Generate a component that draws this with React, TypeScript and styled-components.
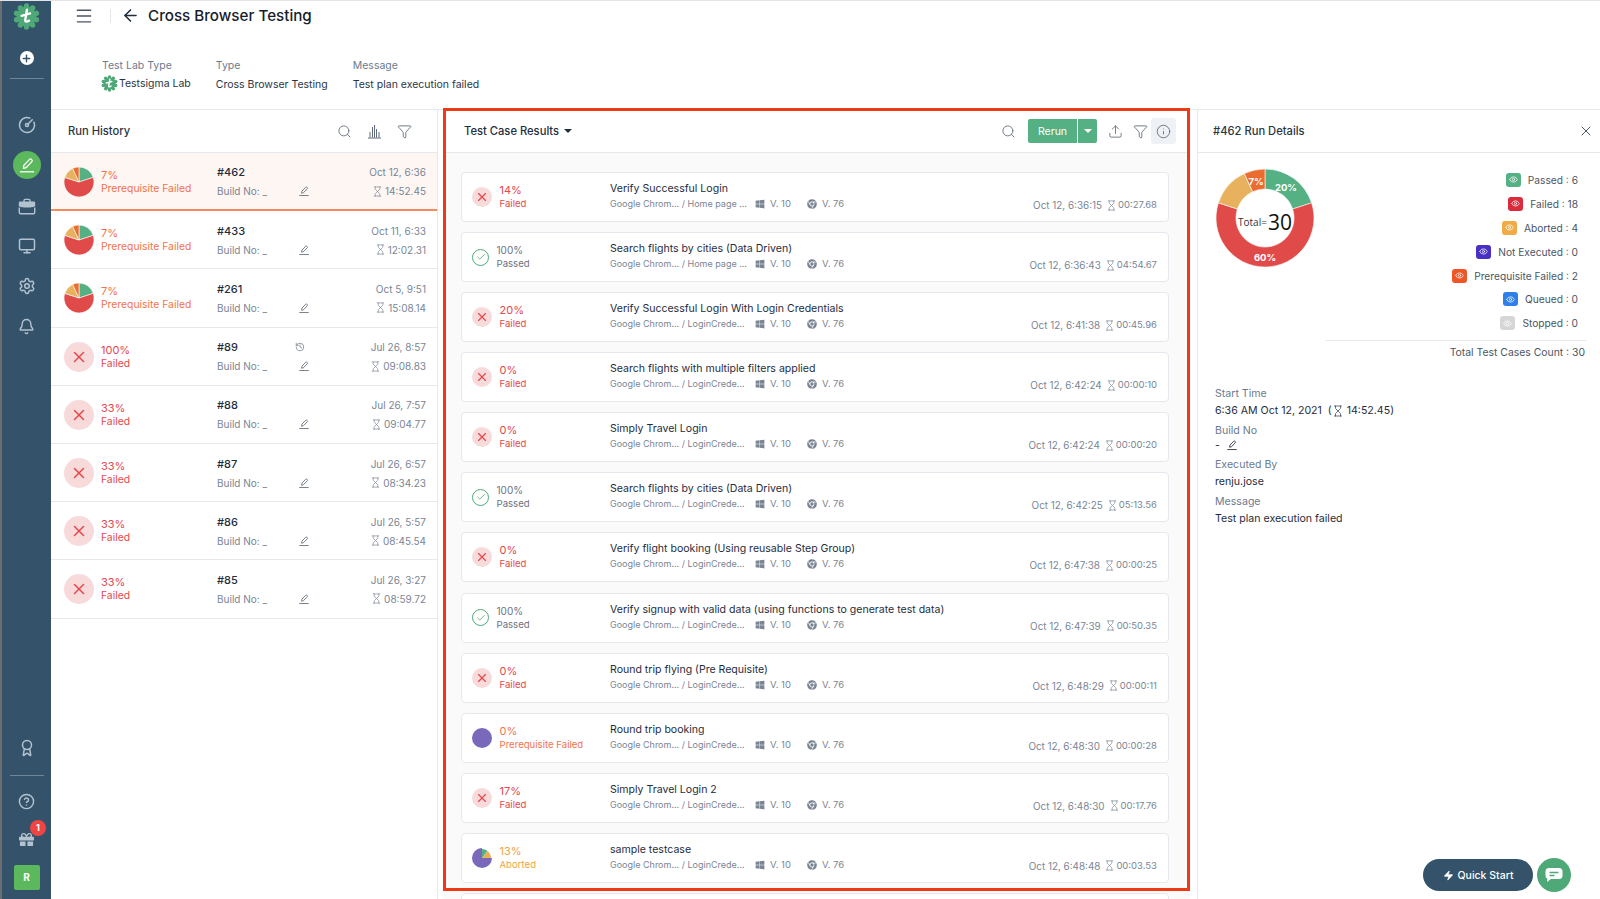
import React from "react";
import styled, { createGlobalStyle } from "styled-components";
import {
  ArrowLeft,
  Award,
  Bell,
  Check,
  CircleGauge,
  CircleHelp,
  Funnel,
  Hourglass,
  History,
  Info,
  Menu,
  Monitor,
  Plus,
  Search,
  Settings,
  Upload,
  X,
  Eye,
  Zap,
} from "lucide-react";
import { FaChrome, FaGift, FaWindows } from "react-icons/fa";

type Status = "failed" | "passed" | "prereq" | "aborted";

const tones: Record<Status, string> = {
  failed: "#e5484d",
  passed: "#6b7280",
  prereq: "#f2734a",
  aborted: "#f3a33f",
};

const labels: Record<Status, string> = {
  failed: "Failed",
  passed: "Passed",
  prereq: "Prerequisite Failed",
  aborted: "Aborted",
};

const runs = [
  { pct: "7%", status: "prereq", id: "#462", date: "Oct 12, 6:36", time: "14:52.45", active: true },
  { pct: "7%", status: "prereq", id: "#433", date: "Oct 11, 6:33", time: "12:02.31" },
  { pct: "7%", status: "prereq", id: "#261", date: "Oct 5, 9:51", time: "15:08.14" },
  { pct: "100%", status: "failed", id: "#89", date: "Jul 26, 8:57", time: "09:08.83", history: true },
  { pct: "33%", status: "failed", id: "#88", date: "Jul 26, 7:57", time: "09:04.77" },
  { pct: "33%", status: "failed", id: "#87", date: "Jul 26, 6:57", time: "08:34.23" },
  { pct: "33%", status: "failed", id: "#86", date: "Jul 26, 5:57", time: "08:45.54" },
  { pct: "33%", status: "failed", id: "#85", date: "Jul 26, 3:27", time: "08:59.72" },
] as { pct: string; status: Status; id: string; date: string; time: string; active?: boolean; history?: boolean }[];

const cases = [
  { pct: "14%", status: "failed", title: "Verify Successful Login", suite: "Home page ...", date: "Oct 12, 6:36:15", time: "00:27.68" },
  { pct: "100%", status: "passed", title: "Search flights by cities (Data Driven)", suite: "Home page ...", date: "Oct 12, 6:36:43", time: "04:54.67" },
  { pct: "20%", status: "failed", title: "Verify Successful Login With Login Credentials", suite: "LoginCrede...", date: "Oct 12, 6:41:38", time: "00:45.96" },
  { pct: "0%", status: "failed", title: "Search flights with multiple filters applied", suite: "LoginCrede...", date: "Oct 12, 6:42:24", time: "00:00:10" },
  { pct: "0%", status: "failed", title: "Simply Travel Login", suite: "LoginCrede...", date: "Oct 12, 6:42:24", time: "00:00:20" },
  { pct: "100%", status: "passed", title: "Search flights by cities (Data Driven)", suite: "LoginCrede...", date: "Oct 12, 6:42:25", time: "05:13.56" },
  { pct: "0%", status: "failed", title: "Verify flight booking (Using reusable Step Group)", suite: "LoginCrede...", date: "Oct 12, 6:47:38", time: "00:00:25" },
  { pct: "100%", status: "passed", title: "Verify signup with valid data (using functions to generate test data)", suite: "LoginCrede...", date: "Oct 12, 6:47:39", time: "00:50.35" },
  { pct: "0%", status: "failed", title: "Round trip flying (Pre Requisite)", suite: "LoginCrede...", date: "Oct 12, 6:48:29", time: "00:00:11" },
  { pct: "0%", status: "prereq", title: "Round trip booking", suite: "LoginCrede...", date: "Oct 12, 6:48:30", time: "00:00:28" },
  { pct: "17%", status: "failed", title: "Simply Travel Login 2", suite: "LoginCrede...", date: "Oct 12, 6:48:30", time: "00:17.76" },
  { pct: "13%", status: "aborted", title: "sample testcase", suite: "LoginCrede...", date: "Oct 12, 6:48:48", time: "00:03.53" },
] as { pct: string; status: Status; title: string; suite: string; date: string; time: string }[];

const legend = [
  { label: "Passed : 6", color: "#55b083" },
  { label: "Failed : 18", color: "#dc2c3c" },
  { label: "Aborted : 4", color: "#f0ab45" },
  { label: "Not Executed : 0", color: "#4a2fc4" },
  { label: "Prerequisite Failed : 2", color: "#ee5527" },
  { label: "Queued : 0", color: "#2f7fe8" },
  { label: "Stopped : 0", color: "#d6d6d6" },
];

// angle in degrees, clockwise from 12 o'clock
const polar = (c: number, r: number, a: number) => {
  const rad = (a * Math.PI) / 180;
  return [c + r * Math.sin(rad), c - r * Math.cos(rad)];
};

const slice = (c: number, r: number, from: number, to: number) => {
  const [x1, y1] = polar(c, r, from);
  const [x2, y2] = polar(c, r, to);
  return `M${c} ${c}L${x1} ${y1}A${r} ${r} 0 ${to - from > 180 ? 1 : 0} 1 ${x2} ${y2}Z`;
};

const ring = (c: number, r: number, inner: number, from: number, to: number) => {
  const [x1, y1] = polar(c, r, from);
  const [x2, y2] = polar(c, r, to);
  const [x3, y3] = polar(c, inner, to);
  const [x4, y4] = polar(c, inner, from);
  const large = to - from > 180 ? 1 : 0;
  return `M${x1} ${y1}A${r} ${r} 0 ${large} 1 ${x2} ${y2}L${x3} ${y3}A${inner} ${inner} 0 ${large} 0 ${x4} ${y4}Z`;
};

const RunPie = () => (
  <svg width="30" height="30" viewBox="0 0 30 30" style={{ flex: "none" }}>
    <path d={slice(15, 15, 0, 72)} fill="#55b083" stroke="#fff" strokeWidth="0.6" />
    <path d={slice(15, 15, 72, 288)} fill="#e04b4a" stroke="#fff" strokeWidth="0.6" />
    <path d={slice(15, 15, 288, 335)} fill="#e8b15d" stroke="#fff" strokeWidth="0.6" />
    <path d={slice(15, 15, 335, 360)} fill="#ea6c2f" stroke="#fff" strokeWidth="0.6" />
  </svg>
);

const AbortedPie = () => (
  <svg width="20" height="20" viewBox="0 0 20 20" style={{ flex: "none" }}>
    <path d={slice(10, 10, 90, 360)} fill="#7a68bb" />
    <path d={slice(10, 9, 0, 38)} fill="#55b083" />
    <path d={slice(10, 9, 38, 90)} fill="#e8b15d" />
  </svg>
);

const Pencil = ({ size = 14, color = "currentColor" }: { size?: number; color?: string }) => (
  <svg width={size} height={size} viewBox="0 0 14 14" fill="none" stroke={color} strokeWidth="1">
    <path d="M4.2 9.6 4.6 7.2 9 2.6a1 1 0 0 1 1.4 0l.4.4a1 1 0 0 1 0 1.4L6.4 9z" strokeLinejoin="round" />
    <path d="M1.5 12.3h11" />
  </svg>
);

const Logo = ({ size }: { size: number }) => (
  <svg width={size} height={size} viewBox="0 0 30 30" style={{ flex: "none" }}>
    <circle cx="15" cy="15" r="11" fill="#4fa877" />
    {Array.from({ length: 10 }, (_, i) => {
      const [x, y] = polar(15, 11.6, i * 36);
      return <circle key={i} cx={x} cy={y} r="3" fill="#4fa877" />;
    })}
    <path d="M15.5 7.5 13.6 19q-.3 2 2 1.6l2.2-1M9.5 14.2l9.5-2.6" fill="none" stroke="#fff" strokeWidth="2.6" strokeLinecap="round" />
  </svg>
);

const BriefcaseIcon = () => (
  <svg width="18" height="17" viewBox="0 0 18 17" fill="none">
    <path d="M6 4V2.4A1 1 0 0 1 7 1.4h4a1 1 0 0 1 1 1V4" stroke="#b4c2cf" strokeWidth="1.4" />
    <path d="M2 3.6h14a1.2 1.2 0 0 1 1.2 1.2v3.4c-2.4 1-5 1.4-8.2 1.4S3.200 9.200.8 8.200V4.800A1.200 1.200 0 0 1 2 3.600z" fill="#b4c2cf" />
    <path d="M1.300 9.500v5a1.200 1.200 0 0 0 1.200 1.200h13a1.200 1.200 0 0 0 1.200-1.200v-5" stroke="#b4c2cf" strokeWidth="1.400" />
  </svg>
);

const BarsIcon = () => (
  <svg width="15" height="15" viewBox="0 0 15 15" fill="none" stroke="#5f6b7a" strokeWidth="1">
    <path d="M1 14h13M3 13.500V8M5.500 13.500V3M7.500 13.500V1M9.500 13.500V5M12 13.500V8" />
  </svg>
);

const ChatIcon = () => (
  <svg width="18" height="16" viewBox="0 0 18 16">
    <path d="M4 1h10a3.500 3.500 0 0 1 3.500 3.500v4A3.500 3.500 0 0 1 14 12H6l-4 3 .4-3.300A3.500 3.500 0 0 1 .5 8.500v-4A3.500 3.500 0 0 1 4 1z" fill="#fff" />
    <path d="M4.500 5.500h9M4.500 8.500h5" stroke="#4fa877" strokeWidth="1.400" />
  </svg>
);

const StatusIcon = ({ status, large }: { status: Status; large?: boolean }) => {
  if (status === "prereq") {
    return large ? <RunPie /> : <PurpleDot />;
  }
  if (status === "aborted") {
    return <AbortedPie />;
  }
  if (status === "passed") {
    return (
      <PassedRing>
        <Check size={10} strokeWidth={2} />
      </PassedRing>
    );
  }
  return (
    <FailedDot $large={large}>
      <X size={large ? 18 : 14} strokeWidth={2} />
    </FailedDot>
  );
};

export default function App() {
  return (
    <>
      <GlobalStyle />
      <Page>
        <Sidebar>
          <Logo size={27} />
          <AddButton>
            <Plus size={11} strokeWidth={3} />
          </AddButton>
          <SideRule />
          <SideItem $top={36}>
            <CircleGauge size={18} />
          </SideItem>
          <ActiveItem>
            <Pencil size={18} color="#fff" />
          </ActiveItem>
          <SideItem $top={17}>
            <BriefcaseIcon />
          </SideItem>
          <SideItem $top={20}>
            <Monitor size={18} />
          </SideItem>
          <SideItem $top={20}>
            <Settings size={18} />
          </SideItem>
          <SideItem $top={20}>
            <Bell size={17} />
          </SideItem>
          <SideBottom>
            <SideItem>
              <Award size={18} />
            </SideItem>
            <SideRule $top={17} />
            <SideItem $top={15}>
              <CircleHelp size={17} />
            </SideItem>
            <GiftItem>
              <FaGift size={15} />
              <GiftBadge>1</GiftBadge>
            </GiftItem>
            <AvatarTile>R</AvatarTile>
          </SideBottom>
        </Sidebar>

        <Main>
          <TopArea>
            <TopBar>
              <Menu size={20} strokeWidth={1.7} color="#4b5563" />
              <TopDivider />
              <ArrowLeft size={19} strokeWidth={2} color="#1f2d3d" />
              <PageTitle>Cross Browser Testing</PageTitle>
            </TopBar>
            <InfoBar>
              <InfoItem>
                <InfoLabel>Test Lab Type</InfoLabel>
                <LabValue>
                  <Logo size={17} />
                  Testsigma Lab
                </LabValue>
              </InfoItem>
              <InfoItem>
                <InfoLabel>Type</InfoLabel>
                <InfoValue>Cross Browser Testing</InfoValue>
              </InfoItem>
              <InfoItem>
                <InfoLabel>Message</InfoLabel>
                <InfoValue>Test plan execution failed</InfoValue>
              </InfoItem>
            </InfoBar>
          </TopArea>

          <Columns>
            <HistoryPanel>
              <HistoryHead>
                <HeadTitle>Run History</HeadTitle>
                <HeadIcons>
                  <Search size={15} strokeWidth={1.4} />
                  <BarsIcon />
                  <Funnel size={15} strokeWidth={1.4} />
                </HeadIcons>
              </HistoryHead>
              {runs.map((run) => (
                <RunRow key={run.id} $active={run.active}>
                  <RunStatus>
                    <StatusIcon status={run.status} large />
                    <StatusText>
                      <Percent $tone={tones[run.status]}>{run.pct}</Percent>
                      <StatusLabel $tone={tones[run.status]} $size={10.35}>
                        {labels[run.status]}
                      </StatusLabel>
                    </StatusText>
                  </RunStatus>
                  <RunMeta>
                    <RunLine>
                      <RunId>{run.id}</RunId>
                      {run.history && <HistoryIcon size={10} strokeWidth={1.6} />}
                    </RunLine>
                    <RunLine>
                      <BuildText>Build No: _</BuildText>
                      <Pencil size={12} />
                    </RunLine>
                  </RunMeta>
                  <RunTimes>
                    <TimeText>{run.date}</TimeText>
                    <TimeText>
                      <Hourglass size={11} strokeWidth={1.5} />
                      {run.time}
                    </TimeText>
                  </RunTimes>
                </RunRow>
              ))}
            </HistoryPanel>

            <ResultsPanel>
              <ResultsHead>
                <ResultsTitle>
                  Test Case Results
                  <Caret $color="#1f2d3d" />
                </ResultsTitle>
                <ResultsTools>
                  <Search size={15} strokeWidth={1.4} />
                  <RerunGroup>
                    <RerunButton>Rerun</RerunButton>
                    <RerunCaret>
                      <Caret $color="#fff" />
                    </RerunCaret>
                  </RerunGroup>
                  <Upload size={15} strokeWidth={1.4} />
                  <Funnel size={15} strokeWidth={1.4} />
                  <InfoToggle>
                    <Info size={15} strokeWidth={1.4} />
                  </InfoToggle>
                </ResultsTools>
              </ResultsHead>
              <CaseList>
                {cases.map((item, i) => (
                  <CaseCard key={i}>
                    <CaseStatus>
                      <StatusIcon status={item.status} />
                      <StatusText>
                        <Percent $tone={tones[item.status]} $size={item.status === "passed" ? 10 : 11}>
                          {item.pct}
                        </Percent>
                        <StatusLabel $tone={tones[item.status]} $size={9.6}>
                          {labels[item.status]}
                        </StatusLabel>
                      </StatusText>
                    </CaseStatus>
                    <CaseBody>
                      <CaseTitle>{item.title}</CaseTitle>
                      <CaseSub>
                        <CaseSuite>Google Chrom... / {item.suite}</CaseSuite>
                        <CaseEnv>
                          <FaWindows size={10} />
                          V. 10
                        </CaseEnv>
                        <CaseEnv>
                          <FaChrome size={10} />
                          V. 76
                        </CaseEnv>
                      </CaseSub>
                    </CaseBody>
                    <CaseTime>
                      {item.date}
                      <CaseDuration>
                        <Hourglass size={11} strokeWidth={1.5} />
                        {item.time}
                      </CaseDuration>
                    </CaseTime>
                  </CaseCard>
                ))}
                <CaseCard />
              </CaseList>
              <Highlight />
            </ResultsPanel>

            <DetailsPanel>
              <DetailsHead>
                <HeadTitle>#462 Run Details</HeadTitle>
                <X size={16} strokeWidth={1.5} color="#4b5563" />
              </DetailsHead>
              <DetailsBody>
                <ChartRow>
                  <svg width="100" height="100" viewBox="0 0 100 100" style={{ flex: "none" }}>
                    <path d={ring(50, 49, 29, 0, 72)} fill="#55b083" stroke="#fff" strokeWidth="0.6" />
                    <path d={ring(50, 49, 29, 72, 288)} fill="#e04b4a" stroke="#fff" strokeWidth="0.6" />
                    <path d={ring(50, 49, 29, 288, 335)} fill="#e8b15d" stroke="#fff" strokeWidth="0.6" />
                    <path d={ring(50, 49, 29, 335, 360)} fill="#ea6c2f" stroke="#fff" strokeWidth="0.6" />
                    <ChartLabel x="71" y="23">20%</ChartLabel>
                    <ChartLabel x="41" y="17">7%</ChartLabel>
                    <ChartLabel x="50" y="93">60%</ChartLabel>
                    <text x="23" y="58" fontSize="10" fill="#333" fontFamily="Open Sans, sans-serif">Total=</text>
                    <text x="53" y="61.500" fontSize="21" fill="#111" fontFamily="Open Sans, sans-serif">30</text>
                  </svg>
                  <Legend>
                    {legend.map((item) => (
                      <LegendRow key={item.label}>
                        <LegendChip $color={item.color}>
                          <Eye size={9} strokeWidth={2} />
                        </LegendChip>
                        {item.label}
                      </LegendRow>
                    ))}
                    <LegendTotal>Total Test Cases Count : 30</LegendTotal>
                  </Legend>
                </ChartRow>
                <DetailGroup $top={26}>
                  <DetailLabel>Start Time</DetailLabel>
                  <DetailValue>
                    6:36 AM Oct 12, 2021&nbsp;&nbsp;(
                    <Hourglass size={12} strokeWidth={1.3} />
                    &nbsp;14:52.45)
                  </DetailValue>
                </DetailGroup>
                <DetailGroup>
                  <DetailLabel>Build No</DetailLabel>
                  <DetailValue $compact>
                    -&nbsp;&nbsp;
                    <Pencil size={12} />
                  </DetailValue>
                </DetailGroup>
                <DetailGroup $top={6}>
                  <DetailLabel>Executed By</DetailLabel>
                  <DetailValue>renju.jose</DetailValue>
                </DetailGroup>
                <DetailGroup>
                  <DetailLabel>Message</DetailLabel>
                  <DetailValue>Test plan execution failed</DetailValue>
                </DetailGroup>
              </DetailsBody>
            </DetailsPanel>
          </Columns>
        </Main>

        <QuickStart>
          <Zap size={11} fill="#fff" strokeWidth={1} />
          Quick Start
        </QuickStart>
        <ChatBubble>
          <ChatIcon />
        </ChatBubble>
      </Page>
    </>
  );
}

// ------------ Style settings ------------
const GlobalStyle = createGlobalStyle`
  html, body {
    margin: 0;
    height: 100%;
    overflow: hidden;
    background: #fff;
    font-family: "Inter", "Liberation Sans", sans-serif;
    -webkit-font-smoothing: antialiased;
  }
`;

const Page = styled.div`
  position: relative;
  display: flex;
  width: 1600px;
  height: 899px;
  overflow: hidden;
  border-top: 1px solid #e4e4e6;
  box-sizing: border-box;
`;

const Sidebar = styled.aside`
  display: flex;
  flex-direction: column;
  align-items: center;
  flex: none;
  width: 51px;
  box-sizing: border-box;
  padding: 2px 0 9px;
  background: #34536a;
  border-left: 2px solid #6b6f72;
  color: #b4c2cf;
`;

const AddButton = styled.div`
  display: flex;
  align-items: center;
  justify-content: center;
  width: 14px;
  height: 14px;
  margin-top: 21px;
  border-radius: 50%;
  background: #fff;
  color: #34536a;
`;

const SideRule = styled.div<{ $top?: number }>`
  width: 34px;
  height: 1px;
  margin-top: ${(p) => p.$top ?? 13}px;
  background: #6f8699;
`;

const SideItem = styled.div<{ $top?: number }>`
  display: flex;
  align-items: center;
  justify-content: center;
  height: 20px;
  margin-top: ${(p) => p.$top ?? 0}px;
`;

const ActiveItem = styled.div`
  display: flex;
  align-items: center;
  justify-content: center;
  width: 28px;
  height: 28px;
  margin-top: 16px;
  border-radius: 50%;
  background: #5cb85c;
`;

const SideBottom = styled.div`
  display: flex;
  flex-direction: column;
  align-items: center;
  margin-top: auto;
`;

const GiftItem = styled.div`
  position: relative;
  display: flex;
  justify-content: center;
  margin-top: 21px;
`;

const GiftBadge = styled.span`
  position: absolute;
  top: -12px;
  left: 11px;
  width: 16px;
  height: 16px;
  border-radius: 50%;
  background: #ee4444;
  color: #fff;
  font-size: 9px;
  font-weight: 700;
  line-height: 16px;
  text-align: center;
`;

const AvatarTile = styled.div`
  width: 26px;
  height: 25px;
  margin-top: 18px;
  border-radius: 2px;
  background: #5cb85c;
  color: #fff;
  font-size: 10px;
  font-weight: 700;
  line-height: 25px;
  text-align: center;
`;

const Main = styled.div`
  display: flex;
  flex-direction: column;
  flex: 1;
  min-width: 0;
`;

const TopArea = styled.header`
  flex: none;
  height: 109px;
  box-sizing: border-box;
  border-bottom: 1px solid #e6e8ec;
`;

const TopBar = styled.div`
  display: flex;
  align-items: center;
  height: 29px;
  padding-left: 23px;
`;

const TopDivider = styled.div`
  width: 1px;
  height: 14px;
  margin: 0 10px 0 16px;
  background: #e6e8ec;
`;

const PageTitle = styled.h1`
  margin: 0 0 0 8px;
  color: #16202c;
  font-size: 15.2px;
  font-weight: 500;
`;

const InfoBar = styled.div`
  display: flex;
  gap: 25px;
  padding: 28px 0 0 51px;
`;

const InfoItem = styled.div`
  display: flex;
  flex-direction: column;
`;

const InfoLabel = styled.span`
  color: #6b7a90;
  font-size: 10.5px;
  line-height: 16px;
`;

const InfoValue = styled.span`
  margin-top: 3px;
  color: #2b3644;
  font-size: 10.5px;
  line-height: 16px;
`;

const LabValue = styled(InfoValue)`
  display: flex;
  align-items: center;
  gap: 1px;
  margin: 1px 0 0 -1px;
  color: #2b3644;
`;

const Columns = styled.div`
  display: flex;
  flex: 1;
  min-height: 0;
`;

const HistoryPanel = styled.section`
  flex: none;
  width: 387px;
  box-sizing: border-box;
  border-right: 1px solid #e6e8ec;
`;

const HistoryHead = styled.div`
  display: flex;
  align-items: center;
  justify-content: space-between;
  height: 43px;
  box-sizing: border-box;
  padding: 0 25px 0 17px;
  border-bottom: 1px solid #e6e8ec;
`;

const HeadTitle = styled.h2`
  margin: 0;
  color: #2b3644;
  font-size: 11.2px;
  font-weight: 500;
`;

const HeadIcons = styled.div`
  display: flex;
  align-items: center;
  gap: 15px;
  color: #5f6b7a;
`;

const RunRow = styled.div<{ $active?: boolean }>`
  display: grid;
  grid-template-columns: 153px 1fr auto;
  align-items: center;
  height: 58.2px;
  box-sizing: border-box;
  padding: 1px 11px 0 13px;
  background: ${(p) => (p.$active ? "#fef6f3" : "#fff")};
  border-bottom: ${(p) => (p.$active ? "2px solid #f58a5e" : "1px solid #e6e8ec")};
`;

const RunStatus = styled.div`
  display: flex;
  align-items: center;
  gap: 7px;
`;

const StatusText = styled.div`
  display: flex;
  flex-direction: column;
  white-space: nowrap;
`;

const Percent = styled.span<{ $tone: string; $size?: number }>`
  color: ${(p) => p.$tone};
  font-size: ${(p) => p.$size ?? 11}px;
  line-height: 13px;
`;

const StatusLabel = styled.span<{ $tone: string; $size: number }>`
  color: ${(p) => p.$tone};
  font-size: ${(p) => p.$size}px;
  line-height: 13px;
`;

const RunMeta = styled.div`
  display: flex;
  flex-direction: column;
  gap: 6px;
  width: 93px;
  color: #5f6b7a;
`;

const RunLine = styled.div`
  display: flex;
  align-items: center;
  justify-content: space-between;
  height: 13px;
`;

const HistoryIcon = styled(History)`
  margin-right: 5px;
`;

const RunId = styled.span`
  color: #1f2d3d;
  font-size: 11px;
  font-weight: 500;
`;

const BuildText = styled.span`
  color: #7a8594;
  font-size: 10px;
`;

const RunTimes = styled.div`
  display: flex;
  flex-direction: column;
  align-items: flex-end;
  gap: 6px;
`;

const TimeText = styled.span`
  display: flex;
  align-items: center;
  gap: 2px;
  height: 13px;
  color: #7a8594;
  font-size: 10px;
`;

const PurpleDot = styled.span`
  flex: none;
  width: 20px;
  height: 20px;
  border-radius: 50%;
  background: #7a68bb;
`;

const PassedRing = styled.span`
  display: flex;
  align-items: center;
  justify-content: center;
  flex: none;
  width: 17px;
  height: 17px;
  box-sizing: border-box;
  border: 1.5px solid #4fa877;
  border-radius: 50%;
  color: #4fa877;
`;

const FailedDot = styled.span<{ $large?: boolean }>`
  display: flex;
  align-items: center;
  justify-content: center;
  flex: none;
  width: ${(p) => (p.$large ? 30 : 20)}px;
  height: ${(p) => (p.$large ? 30 : 20)}px;
  border-radius: 50%;
  background: #f8dadb;
  color: #e5484d;
`;

const ResultsPanel = styled.section`
  position: relative;
  display: flex;
  flex-direction: column;
  flex: none;
  width: 747px;
  margin-left: 5px;
  background: #fafafa;
`;

const Highlight = styled.div`
  position: absolute;
  top: -2px;
  left: 0;
  right: 0;
  bottom: 8px;
  border: 3px solid #ee3a14;
  pointer-events: none;
`;

const ResultsHead = styled.div`
  display: flex;
  align-items: center;
  justify-content: space-between;
  flex: none;
  height: 43px;
  box-sizing: border-box;
  padding: 0 14px 0 21px;
  background: #fff;
  border-bottom: 1px solid #e6e8ec;
`;

const ResultsTitle = styled(HeadTitle)`
  display: flex;
  align-items: center;
  gap: 5px;
  color: #1f2d3d;
`;

const Caret = styled.span<{ $color: string }>`
  width: 0;
  height: 0;
  border-left: 4px solid transparent;
  border-right: 4px solid transparent;
  border-top: 4px solid ${(p) => p.$color};
`;

const ResultsTools = styled.div`
  display: flex;
  align-items: center;
  color: #5f6b7a;
  > svg:first-child {
    margin-right: 12px;
  }
  > svg:nth-child(3) {
    margin: 0 10px 0 11px;
  }
  > svg:nth-child(4) {
    margin-right: 3px;
  }
`;

const RerunGroup = styled.div`
  display: flex;
  gap: 1px;
  height: 24px;
`;

const RerunButton = styled.button`
  width: 49px;
  padding: 0;
  border: none;
  border-radius: 2px 0 0 2px;
  background: #55b083;
  color: #fff;
  font-family: inherit;
  font-size: 10.5px;
`;

const RerunCaret = styled.div`
  display: flex;
  align-items: center;
  justify-content: center;
  width: 19px;
  border-radius: 0 2px 2px 0;
  background: #55b083;
`;

const InfoToggle = styled.div`
  display: flex;
  align-items: center;
  justify-content: center;
  width: 25px;
  height: 26px;
  border-radius: 3px;
  background: #eef1f5;
`;

const CaseList = styled.div`
  display: flex;
  flex-direction: column;
  gap: 10.08px;
  padding: 19px 21px 0 18px;
  overflow: hidden;
`;

const CaseCard = styled.div`
  display: flex;
  align-items: center;
  flex: none;
  height: 50px;
  box-sizing: border-box;
  padding: 0 11px 0 10px;
  background: #fff;
  border: 1px solid #e6e8ee;
  border-radius: 4px;
`;

const CaseStatus = styled.div`
  display: flex;
  align-items: center;
  gap: 7.5px;
  flex: none;
  width: 138px;
`;

const CaseBody = styled.div`
  display: flex;
  flex-direction: column;
  gap: 3px;
  flex: 1;
  min-width: 0;
  margin-top: -2px;
`;

const CaseTitle = styled.div`
  color: #1f2d3d;
  font-size: 10.55px;
  line-height: 13px;
`;

const CaseSub = styled.div`
  display: flex;
  align-items: center;
  color: #7a8594;
  font-size: 9px;
  line-height: 12px;
`;

const CaseSuite = styled.span`
  width: 145px;
  white-space: nowrap;
`;

const CaseEnv = styled.span`
  display: flex;
  align-items: center;
  gap: 5px;
  width: 52px;
  font-size: 9.5px;
`;

const CaseTime = styled.div`
  display: flex;
  align-items: center;
  gap: 4px;
  align-self: flex-end;
  margin-bottom: 10px;
  color: #7a8594;
  font-size: 9.9px;
  line-height: 12px;
`;

const CaseDuration = styled.span`
  display: flex;
  align-items: center;
  gap: 1px;
  font-size: 9.5px;
`;

const DetailsPanel = styled.section`
  flex: 1;
  min-width: 0;
  margin-left: 7px;
  border-left: 1px solid #e6e8ec;
`;

const DetailsHead = styled.div`
  display: flex;
  align-items: center;
  justify-content: space-between;
  height: 43px;
  box-sizing: border-box;
  padding: 0 6px 0 15px;
  border-bottom: 1px solid #e6e8ec;
`;

const DetailsBody = styled.div`
  padding: 15px 14px 0 17px;
`;

const ChartRow = styled.div`
  display: flex;
  justify-content: space-between;
`;

const ChartLabel = styled.text`
  fill: #fff;
  font-size: 9.5px;
  font-weight: 700;
  text-anchor: middle;
`;

const Legend = styled.div`
  display: flex;
  flex-direction: column;
  align-items: flex-end;
  width: 260px;
`;

const LegendRow = styled.div`
  display: flex;
  align-items: center;
  gap: 7px;
  height: 23.9px;
  padding-right: 8px;
  color: #4b5563;
  font-size: 10.2px;
`;

const LegendChip = styled.span<{ $color: string }>`
  display: flex;
  align-items: center;
  justify-content: center;
  width: 15px;
  height: 14px;
  border-radius: 3px;
  background: ${(p) => p.$color};
  color: #fff;
`;

const LegendTotal = styled.div`
  align-self: stretch;
  margin-top: 5px;
  padding: 5px 1px 0 0;
  border-top: 1px solid #e6e8ec;
  color: #4b5563;
  font-size: 10.4px;
  line-height: 14px;
  text-align: right;
`;

const DetailGroup = styled.div<{ $top?: number }>`
  margin-top: ${(p) => p.$top ?? 4}px;
`;

const DetailLabel = styled.div`
  color: #6b7a90;
  font-size: 10.6px;
  line-height: 16px;
`;

const DetailValue = styled.div<{ $compact?: boolean }>`
  display: flex;
  align-items: center;
  height: ${(p) => (p.$compact ? 12 : 17)}px;
  color: #1f2d3d;
  font-size: 10.6px;
`;

const QuickStart = styled.button`
  position: absolute;
  left: 1423px;
  top: 858px;
  display: flex;
  align-items: center;
  justify-content: center;
  gap: 4px;
  width: 110px;
  height: 32px;
  padding: 0;
  border: none;
  border-radius: 16px;
  background: #34536a;
  color: #fff;
  font-family: inherit;
  font-size: 10.5px;
  font-weight: 500;
`;

const ChatBubble = styled.div`
  position: absolute;
  left: 1537px;
  top: 857px;
  display: flex;
  align-items: center;
  justify-content: center;
  width: 34px;
  height: 34px;
  border-radius: 50%;
  background: #4fa877;
`;
